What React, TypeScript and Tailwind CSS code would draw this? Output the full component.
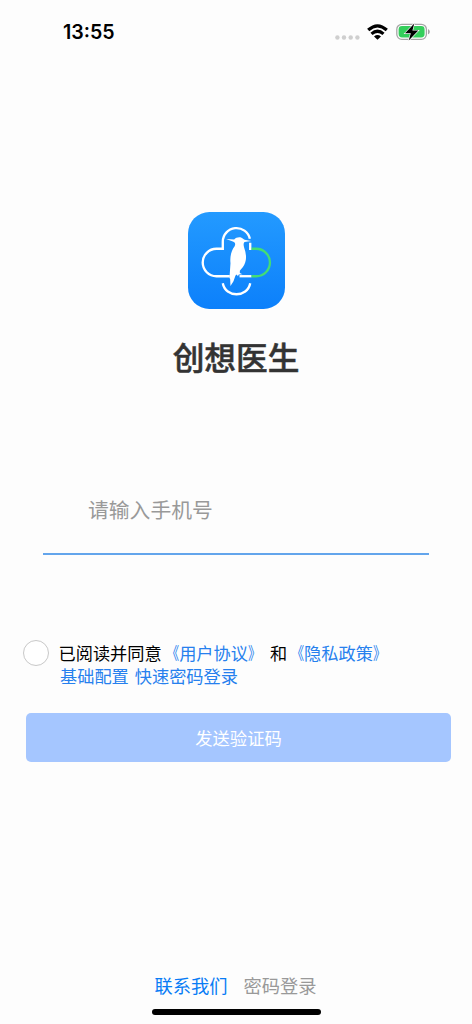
function StatusBar() {
  return (
    <header className="flex h-16 shrink-0 items-center justify-between pr-[41px] pl-[63px]">
      <span className="font-['Inter'] text-[19.6px] leading-6 font-semibold text-black">13:55</span>
      <div className="flex items-center">
        <svg className="mt-[10px] h-[5px] w-[25px]" viewBox="0 0 25 5" fill="#cfcfcf">
          <circle cx="2.4" cy="2.5" r="2.2" />
          <circle cx="9" cy="2.5" r="2.2" />
          <circle cx="15.7" cy="2.5" r="2.2" />
          <circle cx="22.4" cy="2.5" r="2.2" />
        </svg>
        <svg className="ml-[7px] h-4 w-[21px]" viewBox="0 0 21 16" fill="none" stroke="#000" strokeWidth="3.2">
          <path d="M1.2 6Q10.5-2.4 19.8 6" />
          <path d="M4.5 9.9Q10.5 4.6 16.5 9.9" />
          <path d="M7 12.5Q10.5 9.6 14 12.5L10.5 15.8Z" fill="#000" stroke="none" />
        </svg>
        <svg className="ml-2 h-[18px] w-[35px]" viewBox="0 0 35 18">
          <rect x="0.8" y="1.3" width="29.6" height="15" rx="5" fill="#fff" stroke="#a5a5a5" strokeWidth="1.3" />
          <rect x="2.6" y="3.1" width="26" height="11.4" rx="3.4" fill="#34ce5b" />
          <path d="M32 6.3c2.4.6 2.4 4.4 0 5Z" fill="#a5a5a5" />
          <path d="M18.3.5 9 10.3h5.8l-2.1 7.2 9.6-9.9h-5.9Z" fill="#000" stroke="#fff" strokeWidth="1.2" paintOrder="stroke" />
        </svg>
      </div>
    </header>
  );
}

function Logo() {
  return (
    <svg className="h-[97px] w-[97px]" viewBox="24 21 290 290" fill="none">
      <defs>
        <linearGradient id="tile" x1="0" y1="0" x2="0" y2="1">
          <stop offset="0" stopColor="#239aff" />
          <stop offset="1" stopColor="#0c80fb" />
        </linearGradient>
      </defs>
      <rect x="24" y="21" width="290" height="290" rx="64" fill="url(#tile)" />
      <g stroke="#fff" strokeWidth="7">
        <path d="M149 213H109A41 41 0 0 1 109 131H128V110A41 41 0 0 1 209 101" />
        <path d="M210 113V131H214" />
        <path d="M178 213H214" />
        <path d="M128 234C136 278 202 278 210 234" />
      </g>
      <path d="M214 131H228A41 41 0 0 1 228 213H214" stroke="#43dc76" strokeWidth="7" />
      <path
        d="M138 102L162 103C167 98 176 95 184 98C190 101 191 104 197 105L213 108L193 111C189 115 190 121 192 128C197 143 200 158 195 172C192 183 184 190 179 197L179 203L187 207L176 208L173 213L170 208L166 211L160 228L151 242L150 221L148 218L151 174C149 155 153 137 163 124C167 117 165 111 158 109Z"
        fill="#fff"
      />
    </svg>
  );
}

function PolicyLink({ title }: { title: string }) {
  return (
    <a className="flex text-[#2680ee]">
      <span className="w-[17px] text-right">
        <span className="inline-block origin-right [transform:scaleX(0.75)]">《</span>
      </span>
      <span>{title}</span>
      <span className="w-[17px]">
        <span className="inline-block origin-left [transform:scaleX(0.75)]">》</span>
      </span>
    </a>
  );
}

export default function App() {
  return (
    <div className="flex h-[1024px] w-[472px] flex-col bg-[#fdfdfd] font-['Noto_Sans_CJK_SC',sans-serif]">
      <StatusBar />
      <main className="flex flex-1 flex-col">
        <div className="mt-[148px] flex flex-col items-center">
          <Logo />
          <h1 className="mt-[23px] mb-[2px] text-[31.7px] leading-[48px] font-medium text-[#333] [-webkit-text-stroke:0.5px_#333]">
            创想医生
          </h1>
        </div>
        <div className="mt-[102px] mr-[43px] ml-[43px] h-[71px] border-b-2 border-[#63a5ec] pl-[45px]">
          <input
            type="tel"
            aria-label="请输入手机号"
            placeholder="请输入手机号"
            className="h-[50px] w-full bg-transparent text-[20.8px] outline-none placeholder:text-[#999]"
          />
        </div>
        <div className="mt-[85px] flex pl-[23px]">
          <span className="h-[26px] w-[26px] shrink-0 rounded-full border-[1.5px] border-[#c8c8c8] bg-white" />
          <div className="mt-px ml-[9.5px] text-[17.2px] leading-[23px] whitespace-nowrap text-black">
            <p className="flex">
              <span className="mr-[0.5px]">已阅读并同意</span>
              <PolicyLink title="用户协议" />
              <span className="ml-[5px]">和</span>
              <PolicyLink title="隐私政策" />
            </p>
            <p className="flex gap-[6px] pl-[1.5px] text-[#2680ee]">
              <a>基础配置</a>
              <a>快速密码登录</a>
            </p>
          </div>
        </div>
        <button className="mt-[26px] mr-[21px] ml-[26px] h-[49px] rounded-[5px] bg-[#a5c6ff] text-[17.3px] text-white">
          发送验证码
        </button>
      </main>
      <footer className="flex flex-col items-center">
        <div className="mr-px flex gap-4 text-[18.3px] leading-7">
          <a className="text-[#087cf5]">联系我们</a>
          <a className="text-[#999]">密码登录</a>
        </div>
        <div className="mt-[10px] mb-[9px] h-[6px] w-[169px] rounded-full bg-black" />
      </footer>
    </div>
  );
}
